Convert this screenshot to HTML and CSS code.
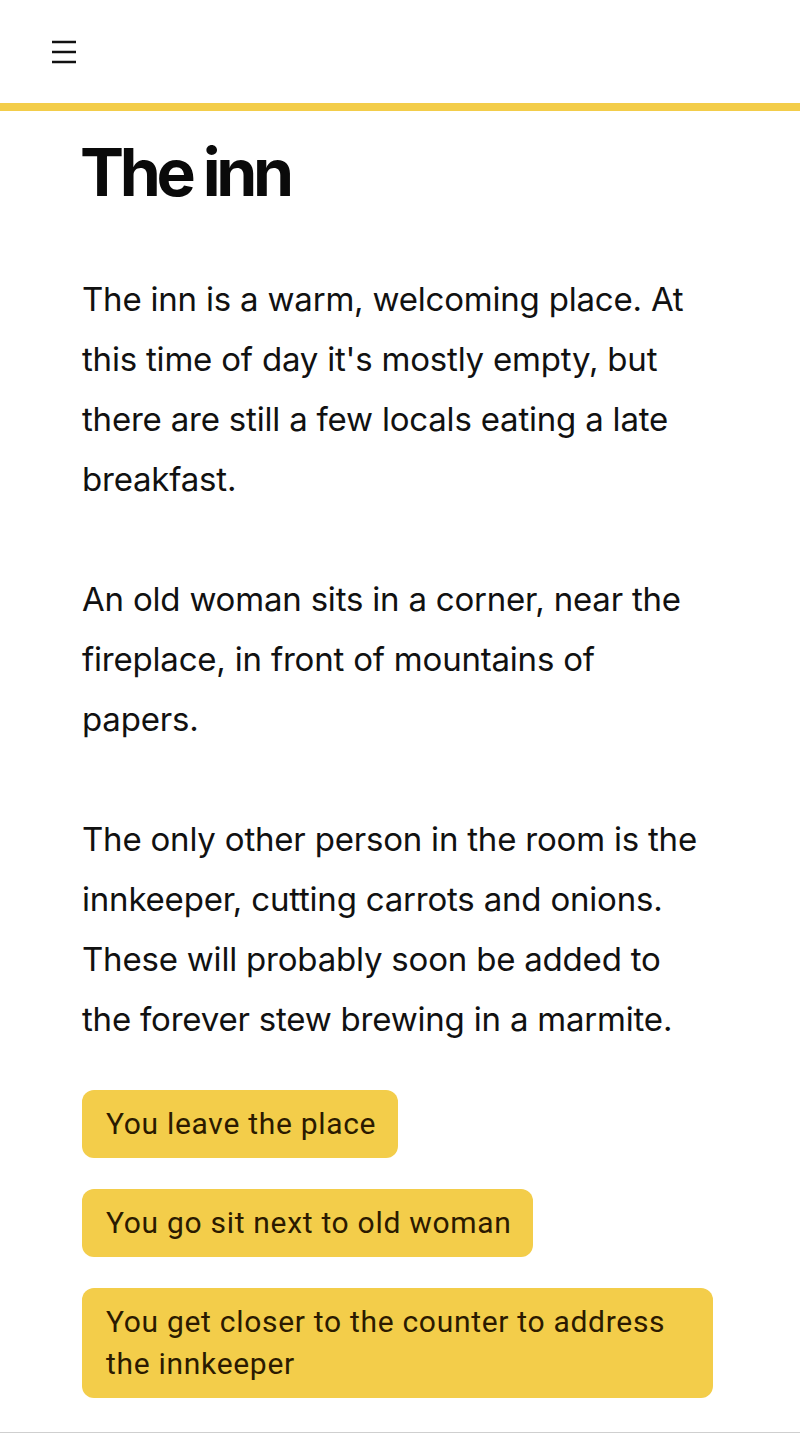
FILE: index.html
```html
<!DOCTYPE html>
<html lang="en">
<head>
<meta charset="utf-8">
<title>The inn</title>
<link rel="stylesheet" href="styles.css">
</head>
<body>
<header class="topbar">
  <button class="menu" aria-label="Menu">
    <svg width="26" height="24" viewBox="0 0 26 24" aria-hidden="true">
      <path d="M1 2h24M1 12h24M1 22h24" stroke="#111" stroke-width="2.6" fill="none"/>
    </svg>
  </button>
</header>
<main class="content">
  <h1 class="title">The inn</h1>
  <p class="text">The inn is a warm, welcoming place. At this time of day it's mostly empty, but there are still a few locals eating a late breakfast.</p>
  <p class="text">An old woman sits in a corner, near the fireplace, in front of mountains of papers.</p>
  <p class="text">The only other person in the room is the innkeeper, cutting carrots and onions. These will probably soon be added to the forever stew brewing in a marmite.</p>
  <div class="choices">
    <button class="choice">You leave the place</button>
    <button class="choice">You go sit next to old woman</button>
    <button class="choice">You get closer to the counter to address the innkeeper</button>
  </div>
</main>
<footer class="foot"></footer>
</body>
</html>
```
FILE: styles.css
```css
html, body {
  margin: 0;
  padding: 0;
  background: #fff;
}
body {
  font-family: "Inter", "Noto Sans", sans-serif;
  color: #111;
}
.topbar {
  height: 103px;
  border-bottom: 8px solid #f3cd4a;
  display: flex;
  align-items: center;
  padding-left: 51px;
}
.menu {
  background: none;
  border: 0;
  padding: 0;
  display: flex;
}
.content {
  padding: 0 87px 0 82px;
}
.title {
  margin: 22px 0 0 -2px;
  font-size: 66px;
  line-height: 79px;
  font-weight: 700;
  letter-spacing: -0.066em;
  color: #0a0a0a;
}
.text {
  font-size: 33px;
  line-height: 60px;
  letter-spacing: -0.2px;
  margin: 60px 0 0;
}
.title + .text {
  margin-top: 57px;
}
.choices {
  margin-top: 41px;
  display: flex;
  flex-direction: column;
  align-items: flex-start;
  gap: 31px;
}
.choice {
  font-family: "Roboto", sans-serif;
  font-size: 30px;
  line-height: 42px;
  letter-spacing: 0.7px;
  padding: 13px 22px 13px 24px;
  background: #f3cd4a;
  color: #2b1a00;
  border: 0;
  border-radius: 12px;
  text-align: left;
}
.foot {
  margin-top: 34px;
  border-top: 1px solid #cfcfcf;
  height: 10px;
}
```
